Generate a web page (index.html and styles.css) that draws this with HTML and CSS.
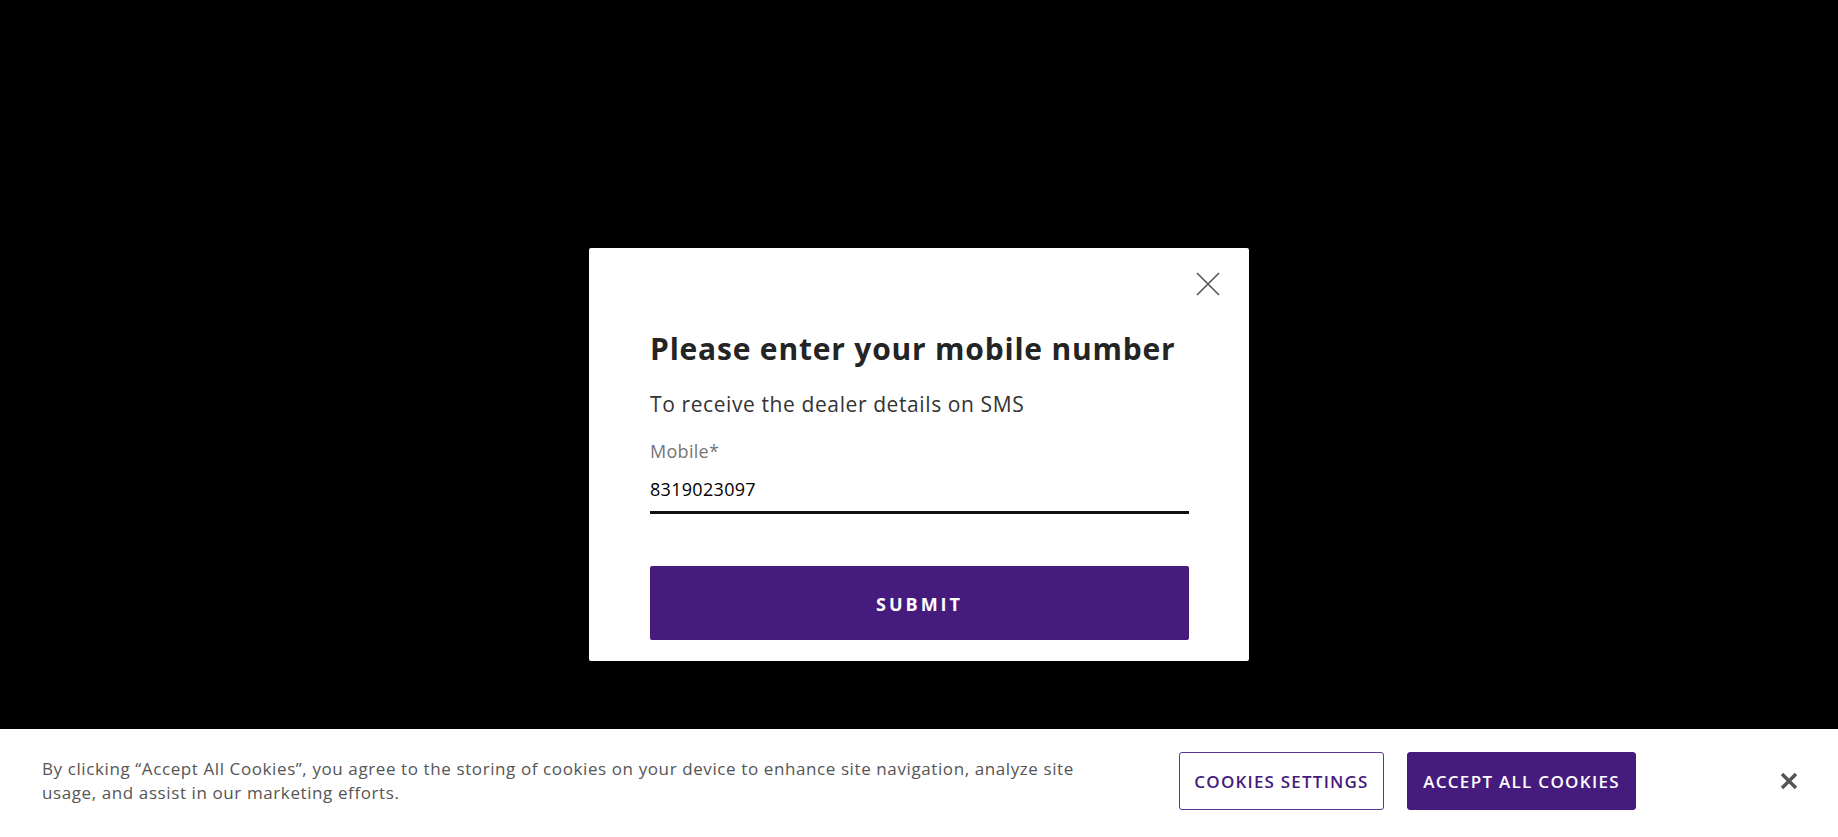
FILE: index.html
```html
<!DOCTYPE html>
<html lang="en">
<head>
<meta charset="utf-8">
<title>Mobile number</title>
<link rel="stylesheet" href="styles.css">
</head>
<body>
<div class="stage">
  <div class="modal">
    <div class="modal-top">
      <button class="modal-close" aria-label="Close">
        <svg width="24" height="24" viewBox="0 0 24 24"><path d="M1 1 L23 23 M23 1 L1 23" stroke="#555" stroke-width="1.6" fill="none"/></svg>
      </button>
    </div>
    <h1 class="modal-title">Please enter your mobile number</h1>
    <p class="modal-sub">To receive the dealer details on SMS</p>
    <label class="field-label" for="mobile">Mobile*</label>
    <input class="field-input" id="mobile" type="text" value="8319023097">
    <button class="submit-btn">SUBMIT</button>
  </div>
</div>
<div class="cookie-bar">
  <p class="cookie-text">By clicking “Accept All Cookies”, you agree to the storing of cookies on your device to enhance site navigation, analyze site usage, and assist in our marketing efforts.</p>
  <div class="cookie-actions">
    <button class="btn-outline">COOKIES SETTINGS</button>
    <button class="btn-solid">ACCEPT ALL COOKIES</button>
  </div>
  <button class="cookie-close" aria-label="Close">
    <svg width="18" height="18" viewBox="0 0 18 18"><path d="M2 2 L16 16 M16 2 L2 16" stroke="#555" stroke-width="3.4" fill="none"/></svg>
  </button>
</div>
</body>
</html>
```
FILE: styles.css
```css
* { box-sizing: border-box; }
html, body { margin: 0; padding: 0; }
body {
  background: #000;
  font-family: "Open Sans", "Liberation Sans", sans-serif;
  width: 1838px;
  height: 837px;
  overflow: hidden;
}
.stage {
  display: flex;
  justify-content: center;
  padding-top: 248px;
}
.modal {
  width: 660px;
  background: #fff;
  border-radius: 2px;
  padding: 24px 60px 21px 61px;
  display: flex;
  flex-direction: column;
}
.modal-top {
  display: flex;
  justify-content: flex-end;
  margin-right: -31px;
  height: 24px;
}
.modal-close {
  border: 0;
  background: none;
  padding: 0;
  width: 24px;
  height: 24px;
  display: block;
}
.modal-close svg { display: block; }
.modal-title {
  margin: 36px 0 0;
  font-size: 30px;
  line-height: 34px;
  font-weight: 700;
  letter-spacing: 0.8px;
  color: #242424;
}
.modal-sub {
  margin: 26px 0 0;
  font-size: 21px;
  line-height: 24px;
  letter-spacing: 0.6px;
  color: #333;
}
.field-label {
  margin-top: 25px;
  font-size: 18px;
  line-height: 20px;
  letter-spacing: 0.3px;
  color: #767676;
}
.field-input {
  margin-top: 17px;
  border: 0;
  border-bottom: 3px solid #111;
  padding: 0 0 11px;
  height: 36px;
  font-family: inherit;
  font-size: 18px;
  line-height: 22px;
  letter-spacing: 0.3px;
  color: #000;
  outline: none;
}
.submit-btn {
  margin-top: 52px;
  height: 74px;
  border: 0;
  border-radius: 2px;
  background: #461b7e;
  color: #fff;
  font-family: inherit;
  font-size: 18px;
  font-weight: 700;
  letter-spacing: 3px;
  padding-top: 2px;
}
.cookie-bar {
  position: fixed;
  left: 0;
  right: 0;
  bottom: 0;
  height: 108px;
  background: #fff;
  display: flex;
  align-items: center;
  padding: 0 40px 4px 42px;
}
.cookie-text {
  margin: 0;
  width: 1060px;
  font-size: 17px;
  line-height: 24px;
  letter-spacing: 0.6px;
  color: #555;
}
.cookie-actions {
  margin-left: 77px;
  display: flex;
  gap: 23px;
}
.btn-outline, .btn-solid {
  height: 58px;
  border-radius: 3px;
  font-family: inherit;
  font-size: 17px;
  font-weight: 600;
  letter-spacing: 1.2px;
  padding: 0;
}
.btn-outline {
  width: 205px;
  background: #fff;
  border: 1px solid #5a3596;
  color: #461b7e;
}
.btn-solid {
  width: 229px;
  background: #461b7e;
  border: 1px solid #461b7e;
  color: #fff;
  letter-spacing: 1.3px;
}
.cookie-close {
  margin-left: auto;
  border: 0;
  background: none;
  padding: 0;
  width: 18px;
  height: 18px;
}
.cookie-close svg { display: block; }
```
